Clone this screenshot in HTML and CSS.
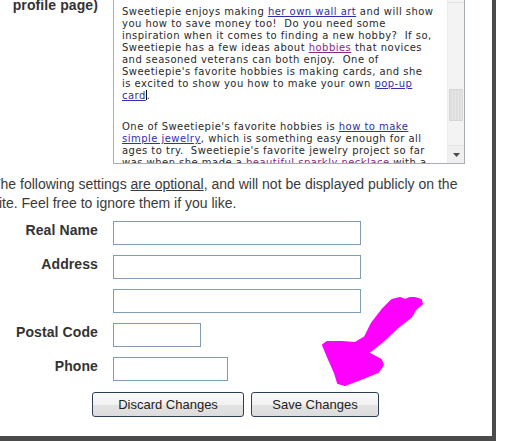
FILE: index.html
```html
<!DOCTYPE html>
<html>
<head>
<meta charset="utf-8">
<link rel="stylesheet" href="styles.css">
</head>
<body>
<div class="frame">
  <div class="desc-row">
    <div class="label desc-label">profile page)</div>
    <div class="ta">
      <div class="ta-text">
        <p class="ta-p first">Sweetiepie enjoys making <a class="lk">her own wall art</a> and will show<br>you how to save money too!&nbsp; Do you need some<br>inspiration when it comes to finding a new hobby?&nbsp; If so,<br>Sweetiepie has a few ideas about <a class="lk visited">hobbies</a> that novices<br>and seasoned veterans can both enjoy.&nbsp; One of<br>Sweetiepie's favorite hobbies is making cards, and she<br>is excited to show you how to make your own <a class="lk">pop-up<br>card</a><span class="caret"></span>.</p>
        <p class="ta-p">One of Sweetiepie's favorite hobbies is <a class="lk">how to make<br>simple jewelry</a>, which is something easy enough for all<br>ages to try.&nbsp; Sweetiepie's favorite jewelry project so far<br>was when she made a <a class="lk visited">beautiful sparkly necklace</a> with a</p>
      </div>
      <div class="sb">
        <div class="sb-track"><div class="sb-thumb"></div></div>
        <div class="sb-btn"><svg width="7" height="4" viewBox="0 0 7 4"><path d="M0 0h7L3.5 4z" fill="#4a4a4a"/></svg></div>
      </div>
    </div>
  </div>
  <p class="note">The following settings <span class="u">are optional</span>, and will not be displayed publicly on the<br>site. Feel free to ignore them if you like.</p>
  <div class="fields">
    <div class="label">Real Name</div><div class="input w-long"></div>
    <div class="label">Address</div><div class="input w-long"></div>
    <div class="label"></div><div class="input w-long"></div>
    <div class="label">Postal Code</div><div class="input w-postal"></div>
    <div class="label">Phone</div><div class="input w-phone"></div>
  </div>
  <div class="buttons">
    <button class="btn btn-discard">Discard Changes</button>
    <button class="btn btn-save">Save Changes</button>
  </div>
  <svg class="arrow" width="496" height="441" viewBox="0 0 496 441">
    <polygon points="415,298 421,300 422,304 418,307 415,310 411,317 398,327 382,342 368,353 381,360 383,365 378,372 358,380 345,385 338,383 335,373 328,357 323,345 327,342 342,342 355,343 365,337 372,323 382,310 392,300 400,298 405,300 410,298" fill="#ff00ff" stroke="#ff00ff" stroke-width="2" stroke-linejoin="round"/>
  </svg>
</div>
</body>
</html>
```

FILE: styles.css
```css
html, body {
  margin: 0;
  padding: 0;
  background: #ffffff;
}
body {
  width: 516px;
  height: 441px;
  overflow: hidden;
  font-family: "Liberation Sans", Arial, sans-serif;
  color: #333333;
}
.frame {
  position: relative;
  width: 492px;
  height: 436px;
  border-right: 4px solid #4b4b4b;
  border-bottom: 5px solid #4b4b4b;
  overflow: hidden;
}
.desc-row {
  display: flex;
  gap: 15px;
  align-items: flex-start;
}
.label {
  width: 98px;
  text-align: right;
  font-weight: bold;
  font-size: 14px;
  letter-spacing: 0.1px;
  line-height: 19px;
  color: #333333;
  white-space: nowrap;
}
.desc-label {
  line-height: 15px;
  margin-top: -2px;
}
.ta {
  box-sizing: border-box;
  width: 352px;
  height: 164px;
  border: 1px solid #a9aeb4;
  border-top: 0;
  display: flex;
  overflow: hidden;
  background: #fff;
}
.ta-text {
  flex: 1;
  padding: 6px 0 0 8px;
  font-family: "DejaVu Sans", Verdana, sans-serif;
  font-size: 10px;
  letter-spacing: 0.47px;
  line-height: 12px;
  color: #2a2a2a;
  white-space: nowrap;
  overflow: hidden;
}
.ta-p {
  margin: 0;
}
.ta-p.first {
  margin-bottom: 19px;
}
.lk {
  color: #3030a8;
  text-decoration: underline;
}
.lk.visited {
  color: #862a86;
}
.caret {
  display: inline-block;
  width: 1px;
  height: 10px;
  background: #000;
  vertical-align: -1px;
}
.sb {
  width: 17px;
  display: flex;
  flex-direction: column;
  background: #f3f3f3;
  border-left: 1px solid #ececec;
  box-sizing: border-box;
}
.sb-track {
  flex: 1;
  border-top: 1px solid #e2e2e2;
  margin-top: 2px;
}
.sb-thumb {
  margin: 86px 1px 0 1px;
  height: 32px;
  background: repeating-linear-gradient(90deg, #dedede 0 2px, #e6e6e6 2px 3px);
  border: 1px solid #d6d6d6;
  box-sizing: border-box;
}
.sb-btn {
  height: 17px;
  display: flex;
  align-items: center;
  justify-content: center;
  background: #efefef;
  border-top: 1px solid #e4e4e4;
}
.note {
  margin: 11px 0 0 -8px;
  font-size: 14px;
  line-height: 19px;
  color: #3a3a3a;
  white-space: nowrap;
}
.u {
  text-decoration: underline;
}
.fields {
  margin-top: 8px;
  display: grid;
  grid-template-columns: 98px auto;
  column-gap: 15px;
  row-gap: 10px;
  align-items: start;
}
.input {
  box-sizing: border-box;
  height: 24px;
  border: 1px solid #7f9db9;
  background: #fff;
  justify-self: start;
}
.w-long { width: 248px; }
.w-postal { width: 88px; }
.w-phone { width: 115px; }
.buttons {
  margin-top: 11px;
  padding-left: 92px;
  display: flex;
  gap: 7px;
}
.btn {
  box-sizing: border-box;
  height: 25px;
  padding: 0;
  border: 1px solid #2e3e52;
  border-radius: 3px;
  background: linear-gradient(#fbfbfb 0%, #f1f1f1 50%, #e4e4e4 51%, #dcdcdc 100%);
  font-family: "Liberation Sans", Arial, sans-serif;
  font-size: 13px;
  color: #222222;
}
.btn-discard { width: 152px; }
.btn-save { width: 128px; }
.arrow {
  position: absolute;
  left: 0;
  top: 0;
  pointer-events: none;
}
```
